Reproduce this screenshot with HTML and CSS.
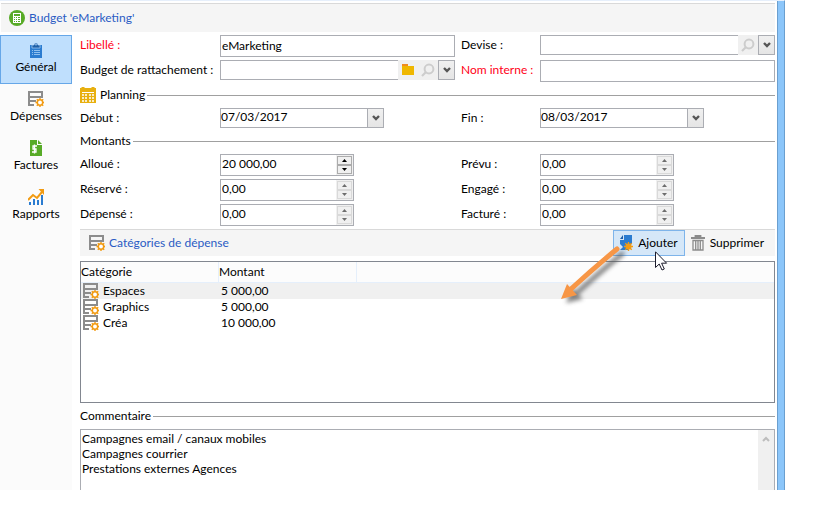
FILE: index.html
```html
<!DOCTYPE html>
<html lang="fr">
<head>
  <meta charset="UTF-8">
  <title>Budget 'eMarketing'</title>
  <link rel="stylesheet" href="styles.css">
</head>
<body>
  <!-- shared icons -->
  <svg class="sprite" aria-hidden="true">
    <symbol id="icon-expense" viewBox="0 0 16 16">
      <path d="M0 0h15v7H2v2h6v2H2v2h4v2H0zM2 2v3h11V2z" fill="#8c8c8c" fill-rule="evenodd"/>
      <path d="M12 7v9M7.5 11.5h9M8.8 8.3l6.4 6.4M15.2 8.3l-6.4 6.4" stroke="#f29b12" stroke-width="1.4"/>
      <circle cx="12" cy="11.5" r="2.7" fill="#fff" stroke="#f29b12" stroke-width="1.5"/>
    </symbol>
    <symbol id="icon-search" viewBox="0 0 14 14">
      <path d="M5 9l-4 4" stroke="#cdcdcd" stroke-width="2.2"/>
      <circle cx="8" cy="6" r="4.4" fill="none" stroke="#cdcdcd" stroke-width="2"/>
    </symbol>
    <symbol id="icon-down" viewBox="0 0 8 6">
      <path d="M1 1l3 3 3-3" fill="none" stroke="#555" stroke-width="2.4"/>
    </symbol>
    <symbol id="icon-spin-up" viewBox="0 0 5 3"><path d="M0 3l2.5-3L5 3z" fill="currentColor"/></symbol>
    <symbol id="icon-spin-down" viewBox="0 0 5 3"><path d="M0 0l2.5 3L5 0z" fill="currentColor"/></symbol>
  </svg>

  <div class="window">
    <header class="title-bar">
      <svg class="icon" viewBox="0 0 16 16">
        <circle cx="8" cy="8" r="8" fill="#58ab27"/>
        <path d="M4 3h8v10H4z" fill="#fff"/>
        <path d="M5 4h6v2H5zM5 7h1v1H5zM7 7h1v1H7zM9 7h2v1H9zM5 9h1v1H5zM7 9h1v1H7zM9 9h2v1H9zM5 11h1v1H5zM7 11h1v1H7zM9 11h2v1H9z" fill="#58ab27"/>
      </svg>
      <h1>Budget 'eMarketing'</h1>
    </header>

    <div class="body">
      <nav class="sidebar">
        <button type="button" class="tab active">
          <svg class="icon" viewBox="0 0 16 16">
            <path d="M2 3h12v13H2z" fill="#2b7cd0"/>
            <path d="M4 6V3h2a2 2 0 0 1 4 0h2v3z" fill="#1d5fa8" stroke="#bfdffd" stroke-width=".6"/>
            <circle cx="8" cy="2.8" r=".8" fill="#bfdffd"/>
            <path d="M4 8.5h1M6 8.5h6M4 10.5h1M6 10.5h6M4 12.5h1M6 12.5h6" stroke="#8fc0ee"/>
          </svg>
          <span>Général</span>
        </button>
        <button type="button" class="tab">
          <svg class="icon"><use href="#icon-expense"/></svg>
          <span>Dépenses</span>
        </button>
        <button type="button" class="tab">
          <svg class="icon" viewBox="0 0 16 16">
            <path d="M2 0h7v5h5v11H2z" fill="#58ab27"/>
            <path d="M10 0l4 4h-4z" fill="#58ab27"/>
            <path d="M9 6H5v3h3v3H4M6.5 4.5v9" fill="none" stroke="#fff" stroke-width="1.3"/>
          </svg>
          <span>Factures</span>
        </button>
        <button type="button" class="tab">
          <svg class="icon" viewBox="0 0 16 16">
            <path d="M1 13h2v3H1zM5 10h2v6H5zM9 11h2v5H9zM13 6h2v10h-2z" fill="#2b7cd0"/>
            <path d="M0 11l5-5 4 3 5-6" fill="none" stroke="#f29b12" stroke-width="2"/>
            <path d="M10.5 0H16v6z" fill="#f29b12"/>
          </svg>
          <span>Rapports</span>
        </button>
      </nav>

      <main class="main">
        <div class="form-grid">
          <label for="libelle" class="required">Libellé :</label>
          <input type="text" id="libelle" class="text-field" value="eMarketing">
          <label for="devise">Devise :</label>
          <div class="combo">
            <select id="devise"><option></option></select>
            <div class="combo-tools">
              <button type="button" aria-label="Rechercher"><svg width="14" height="14"><use href="#icon-search"/></svg></button>
              <span class="arrow"><svg width="8" height="6"><use href="#icon-down"/></svg></span>
            </div>
          </div>

          <label for="rattachement">Budget de rattachement :</label>
          <div class="combo">
            <select id="rattachement"><option></option></select>
            <div class="combo-tools">
              <button type="button" aria-label="Ouvrir">
                <svg width="14" height="12" viewBox="0 0 14 12"><path d="M1 0h6v3H1z" fill="#f08c1e"/><path d="M1 2h12v9H1z" fill="#efb700"/></svg>
              </button>
              <button type="button" aria-label="Rechercher"><svg width="14" height="14"><use href="#icon-search"/></svg></button>
              <span class="arrow"><svg width="8" height="6"><use href="#icon-down"/></svg></span>
            </div>
          </div>
          <label for="nom" class="required">Nom interne :</label>
          <input type="text" id="nom" class="text-field">
        </div>

        <h2 class="section">
          <svg class="icon" viewBox="0 0 16 16">
            <path d="M0 1h16v15H0z" fill="#e8b010"/>
            <path d="M3 0v3M13 0v3" stroke="#e8b010" stroke-width="3"/>
            <path d="M2 5.5h12" stroke="#fff"/>
            <path d="M2 8h2M5 8h2M9 8h2M12 8h2M2 11h2M5 11h2M9 11h2M12 11h2M2 14h2M5 14h2M9 14h2M12 14h2" stroke="#fff" stroke-width="1.6"/>
          </svg>
          Planning
        </h2>
        <div class="form-grid">
          <label for="debut">Début :</label>
          <div class="date-field">
            <input type="text" id="debut" value="07/03/2017">
            <button type="button" class="arrow" aria-label="Calendrier"><svg width="8" height="6"><use href="#icon-down"/></svg></button>
          </div>
          <label for="fin">Fin :</label>
          <div class="date-field">
            <input type="text" id="fin" value="08/03/2017">
            <button type="button" class="arrow" aria-label="Calendrier"><svg width="8" height="6"><use href="#icon-down"/></svg></button>
          </div>
        </div>

        <h2 class="section">Montants</h2>
        <div class="form-grid">
          <label for="alloue">Alloué :</label>
          <div class="spinner">
            <input type="text" id="alloue" value="20 000,00">
            <div class="spin">
              <button type="button" aria-label="Plus"><svg width="5" height="3"><use href="#icon-spin-up"/></svg></button>
              <button type="button" aria-label="Moins"><svg width="5" height="3"><use href="#icon-spin-down"/></svg></button>
            </div>
          </div>
          <label for="prevu">Prévu :</label>
          <div class="spinner readonly">
            <input type="text" id="prevu" value="0,00" readonly>
            <div class="spin">
              <button type="button" aria-label="Plus" disabled><svg width="5" height="3"><use href="#icon-spin-up"/></svg></button>
              <button type="button" aria-label="Moins" disabled><svg width="5" height="3"><use href="#icon-spin-down"/></svg></button>
            </div>
          </div>

          <label for="reserve">Réservé :</label>
          <div class="spinner readonly">
            <input type="text" id="reserve" value="0,00" readonly>
            <div class="spin">
              <button type="button" aria-label="Plus" disabled><svg width="5" height="3"><use href="#icon-spin-up"/></svg></button>
              <button type="button" aria-label="Moins" disabled><svg width="5" height="3"><use href="#icon-spin-down"/></svg></button>
            </div>
          </div>
          <label for="engage">Engagé :</label>
          <div class="spinner readonly">
            <input type="text" id="engage" value="0,00" readonly>
            <div class="spin">
              <button type="button" aria-label="Plus" disabled><svg width="5" height="3"><use href="#icon-spin-up"/></svg></button>
              <button type="button" aria-label="Moins" disabled><svg width="5" height="3"><use href="#icon-spin-down"/></svg></button>
            </div>
          </div>

          <label for="depense">Dépensé :</label>
          <div class="spinner readonly">
            <input type="text" id="depense" value="0,00" readonly>
            <div class="spin">
              <button type="button" aria-label="Plus" disabled><svg width="5" height="3"><use href="#icon-spin-up"/></svg></button>
              <button type="button" aria-label="Moins" disabled><svg width="5" height="3"><use href="#icon-spin-down"/></svg></button>
            </div>
          </div>
          <label for="facture">Facturé :</label>
          <div class="spinner readonly">
            <input type="text" id="facture" value="0,00" readonly>
            <div class="spin">
              <button type="button" aria-label="Plus" disabled><svg width="5" height="3"><use href="#icon-spin-up"/></svg></button>
              <button type="button" aria-label="Moins" disabled><svg width="5" height="3"><use href="#icon-spin-down"/></svg></button>
            </div>
          </div>
        </div>

        <div class="toolbar">
          <svg class="icon"><use href="#icon-expense"/></svg>
          <h2>Catégories de dépense</h2>
          <button type="button" class="tool hover">
            <svg class="icon" viewBox="0 0 16 16">
              <path d="M5 0h8v9H9v6H1V5h4z" fill="#2b7cd0"/>
              <path d="M1 4l3-4v4z" fill="#1d5fa8"/>
              <path d="M1 9l3 3-3 3z" fill="#d5e7f8"/>
              <path d="M9.5 7v9M5 11.5h9M6.3 8.3l6.4 6.4M12.7 8.3l-6.4 6.4" stroke="#f29b12" stroke-width="1.4"/>
              <circle cx="9.5" cy="11.5" r="3" fill="#f29b12"/>
            </svg>
            Ajouter
          </button>
          <button type="button" class="tool">
            <svg class="icon" viewBox="0 0 16 16">
              <path d="M0 3h14M4.5 3V1h5v2" fill="none" stroke="#8c8c8c" stroke-width="1.8"/>
              <path d="M2 5.5h10V15H2zM4.7 6v9M7 6v9M9.3 6v9" fill="none" stroke="#8c8c8c" stroke-width="1.3"/>
            </svg>
            Supprimer
          </button>
          <svg class="callout" width="80" height="64" viewBox="0 0 80 64" aria-hidden="true">
            <g class="callout-shadow" fill="#555" stroke="#555">
              <path d="M66 11Q45 28 22 49" fill="none" stroke-width="5" stroke-linecap="round"/>
              <path d="M10 60l6-15 11 11z" stroke="none"/>
            </g>
            <path d="M61 6Q39 24 15 46" fill="none" stroke="#f79646" stroke-width="5" stroke-linecap="round"/>
            <path d="M5 56l6-15 10 11z" fill="#f79646"/>
          </svg>
          <svg class="pointer" width="13" height="20" viewBox="0 0 13 20" aria-hidden="true">
            <path d="M.5.8v15.7l3.700-3.500 2.800 6 2.300-1-2.700-5.800h5z" fill="#fff" stroke="#1c1c2c"/>
          </svg>
        </div>

        <div class="list">
          <table>
            <thead>
              <tr><th>Catégorie</th><th>Montant</th><th class="rest"></th></tr>
            </thead>
            <tbody>
              <tr class="selected"><td><div class="cell"><svg class="icon"><use href="#icon-expense"/></svg>Espaces</div></td><td>5 000,00</td><td></td></tr>
              <tr><td><div class="cell"><svg class="icon"><use href="#icon-expense"/></svg>Graphics</div></td><td>5 000,00</td><td></td></tr>
              <tr><td><div class="cell"><svg class="icon"><use href="#icon-expense"/></svg>Créa</div></td><td>10 000,00</td><td></td></tr>
            </tbody>
          </table>
        </div>

        <label for="commentaire" class="section">Commentaire</label>
        <div class="comment">
          <textarea id="commentaire" rows="4">Campagnes email / canaux mobiles
Campagnes courrier
Prestations externes Agences</textarea>
          <div class="scrollbar">
            <svg width="8" height="6" viewBox="0 0 8 6"><path d="M1 5l3-3 3 3" fill="none" stroke="#bdbdbd" stroke-width="2"/></svg>
          </div>
        </div>
      </main>
    </div>
  </div>
</body>
</html>
```
FILE: styles.css
```css
* {
    box-sizing: border-box;
}

body {
    margin: 0;
    background: #fff;
    color: #000;
    font-family: Lato, "Open Sans", sans-serif;
    font-size: 12px;
    line-height: 16px;
}

button, input, select, textarea {
    margin: 0;
    padding: 0;
    border: none;
    border-radius: 0;
    background: none;
    color: inherit;
    font: inherit;
    outline: none;
}

h1, h2 {
    margin: 0;
    font-size: 12px;
    font-weight: normal;
}

svg {
    display: block;
    flex: none;
}

.sprite {
    position: absolute;
    width: 0;
    height: 0;
}

.icon {
    width: 16px;
    height: 16px;
}

.window {
    margin-right: 41px;
    padding-right: 9px;
    border-top: 1px solid #e6effb;
    border-right: 1px solid #6b9fcf;
    box-shadow: inset -6px 0 #8cc6fa, inset -7px 0 #6b9fcf;
}

.title-bar {
    display: flex;
    align-items: center;
    gap: 4px;
    height: 29px;
    margin: 2px 0 3px 1px;
    padding-left: 8px;
    border-top: 1px solid #d9d9d9;
    background: #f5f5f5;
    color: #2a5bc4;
}

.body {
    display: flex;
}

/* left tabs */
.sidebar {
    width: 72px;
    background: #fbfbfb;
}

.tab {
    display: flex;
    flex-direction: column;
    align-items: center;
    gap: 1px;
    width: 100%;
    height: 49px;
    padding-top: 6px;
    border: 1px solid transparent;
}

.tab.active {
    border-color: #66a7e8;
    background: #bfdffd;
}

.main {
    flex: 1;
    min-width: 0;
    padding-left: 8px;
}

/* forms */
.form-grid {
    display: grid;
    grid-template-columns: 140px 1fr 85px 1fr;
    gap: 3px 0;
    align-items: start;
}

.form-grid label {
    line-height: 20px;
    white-space: nowrap;
}

.form-grid label:nth-child(4n + 3) {
    padding-left: 6px;
}

.form-grid .required {
    color: #ff0018;
}

.text-field {
    width: 100%;
    min-width: 0;
    height: 22px;
    padding: 0 1px 2px;
    border: 1px solid #abadb3;
}

.combo {
    position: relative;
    height: 20px;
}

.combo select {
    appearance: none;
    width: 100%;
    height: 20px;
    border: 1px solid #abadb3;
}

.combo-tools {
    position: absolute;
    top: 0;
    right: 0;
    display: flex;
    height: 20px;
}

.combo-tools button {
    display: flex;
    align-items: center;
    justify-content: center;
    width: 20px;
    background: #f0f0f0;
}

.arrow {
    display: flex;
    align-items: center;
    justify-content: center;
    width: 17px;
    border: 1px solid #abadb3;
    background: linear-gradient(#f0f0f0, #e5e5e5);
}

.combo .arrow {
    pointer-events: none;
}

.date-field {
    display: flex;
    width: 164px;
    height: 20px;
}

.date-field input {
    flex: 1;
    min-width: 0;
    padding-bottom: 2px;
    border: 1px solid #abadb3;
    border-right: none;
}

.spinner {
    display: flex;
    width: 134px;
    height: 22px;
    border: 1px solid #abadb3;
}

.spinner input {
    flex: 1;
    min-width: 0;
    padding: 0 1px 2px;
}

.spin {
    display: flex;
    flex-direction: column;
    width: 17px;
    padding: 1px;
    background: #f0f0f0;
}

.spin button {
    display: flex;
    flex: 1;
    align-items: center;
    justify-content: center;
    border: 1px solid #acacac;
    color: #000;
}

.readonly .spin button {
    border-color: #d9d9d9;
    color: #6d6d6d;
}

.section {
    display: flex;
    align-items: center;
    gap: 4px;
    height: 26px;
}

.section::after {
    content: "";
    flex: 1;
    height: 1px;
    margin-left: -2px;
    background: #a0a0a0;
}

/* expense categories */
.toolbar {
    position: relative;
    display: flex;
    align-items: center;
    height: 27px;
    margin: 3px 0 5px;
    padding-left: 9px;
    border-top: 1px solid #d9d9d9;
    background: #f5f5f5;
}

.toolbar h2 {
    flex: 1;
    padding-left: 4px;
    color: #2a5bc4;
}

.tool {
    display: flex;
    align-items: center;
    gap: 3px;
    height: 26px;
    padding: 0 10px 0 5px;
    border: 1px solid transparent;
}

.tool.hover {
    padding-right: 6px;
    border-color: #7eb4ea;
    background: #d5e7f8;
}

.callout {
    position: absolute;
    top: 13px;
    right: 139px;
}

.callout-shadow {
    filter: blur(2px);
    opacity: 0.7;
}

.pointer {
    position: absolute;
    top: 21px;
    right: 107px;
}

.list {
    height: 142px;
    border: 1px solid #828790;
}

.list table {
    width: 100%;
    table-layout: fixed;
    border-spacing: 0;
}

.list th {
    width: 138px;
    height: 21px;
    padding: 0;
    border-right: 1px solid #e5effb;
    border-bottom: 1px solid #e5effb;
    background: #fcfcfc;
    font-weight: normal;
    text-align: left;
}

.list .rest {
    width: auto;
    border-right: none;
}

.list td {
    height: 16px;
    padding: 0 2px;
}

.list .selected {
    background: #f0f0f0;
}

.cell {
    display: flex;
    gap: 4px;
}

.comment {
    display: flex;
    border: 1px solid #abadb3;
    border-bottom: none;
}

.comment textarea {
    flex: 1;
    height: 60px;
    padding: 1px;
    line-height: 15px;
    overflow: hidden;
    resize: none;
}

.scrollbar {
    width: 16px;
    padding: 6px 4px;
    background: #f0f0f0;
}
```
